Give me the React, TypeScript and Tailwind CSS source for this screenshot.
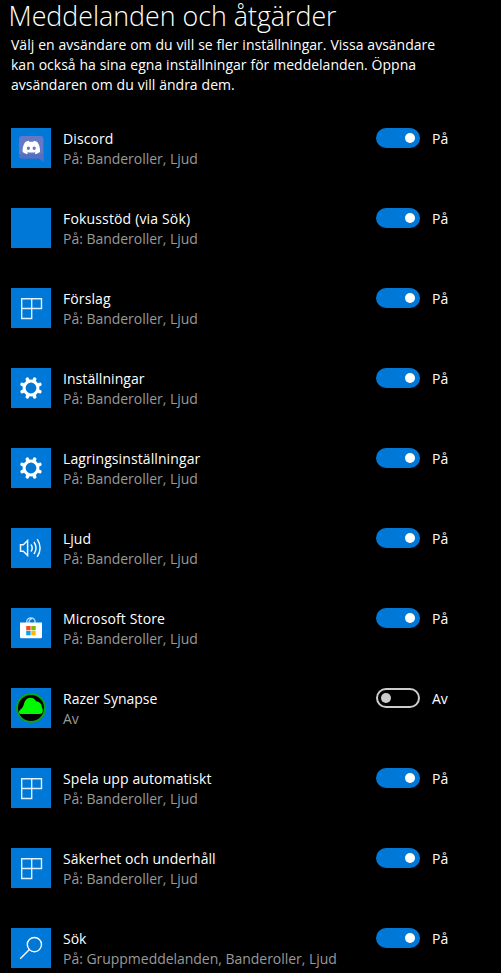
import { FaDiscord } from 'react-icons/fa';

type IconName = 'discord' | 'blank' | 'tiles' | 'gear' | 'sound' | 'store' | 'razer' | 'search';

interface Sender {
  name: string;
  detail: string;
  icon: IconName;
  on: boolean;
  nameSpacing: string;
}

const both = 'På: Banderoller, Ljud';

const senders: Sender[] = [
  { name: 'Discord', detail: both, icon: 'discord', on: true, nameSpacing: 'tracking-[0.1px]' },
  { name: 'Fokusstöd (via Sök)', detail: both, icon: 'blank', on: true, nameSpacing: 'tracking-[0.16px]' },
  { name: 'Förslag', detail: both, icon: 'tiles', on: true, nameSpacing: 'tracking-[0.1px]' },
  { name: 'Inställningar', detail: both, icon: 'gear', on: true, nameSpacing: 'tracking-[0.06px]' },
  { name: 'Lagringsinställningar', detail: both, icon: 'gear', on: true, nameSpacing: 'tracking-[0.1px]' },
  { name: 'Ljud', detail: both, icon: 'sound', on: true, nameSpacing: 'tracking-[0px]' },
  { name: 'Microsoft Store', detail: both, icon: 'store', on: true, nameSpacing: 'tracking-[0.13px]' },
  { name: 'Razer Synapse', detail: 'Av', icon: 'razer', on: false, nameSpacing: 'tracking-[0px]' },
  { name: 'Spela upp automatiskt', detail: both, icon: 'tiles', on: true, nameSpacing: 'tracking-[0.1px]' },
  { name: 'Säkerhet och underhåll', detail: both, icon: 'tiles', on: true, nameSpacing: 'tracking-[0.05px]' },
  { name: 'Sök', detail: 'På: Gruppmeddelanden, Banderoller, Ljud', icon: 'search', on: true, nameSpacing: 'tracking-[0px]' },
];

const toothAngles = [22.5, 67.5, 112.5, 157.5, 202.5, 247.5, 292.5, 337.5];

function Glyph({ icon }: { icon: IconName }) {
  switch (icon) {
    case 'discord':
      return (
        <>
          <path d="M11 8h18.5a3 3 0 0 1 3 3v23l-4.5-3.5H11a3 3 0 0 1-3-3V11a3 3 0 0 1 3-3z" fill="#6379c5" />
          <path d="M8 26v1.5a3 3 0 0 0 3 3h17l4.5 3.5v-8z" fill="#4c66bb" opacity="0.5" />
          <FaDiscord x={10.8} y={10} size={19} color="#fff" />
        </>
      );
    case 'tiles':
      return <path d="M10.7 10.7h19.8v9.8h-9.8v10h-10zM20.7 10.7v9.8h-10" fill="none" stroke="#dff0fd" strokeWidth="1.4" />;
    case 'gear':
      return (
        <g stroke="#fff" fill="none">
          <circle cx="20" cy="20" r="6.9" strokeWidth="3" />
          {toothAngles.map((a) => (
            <path key={a} d="M20 12.6V10.4" strokeWidth="3.6" strokeLinecap="round" transform={`rotate(${a} 20 20)`} />
          ))}
        </g>
      );
    case 'sound':
      return (
        <g fill="none" stroke="#eef7fe" strokeWidth="1.5">
          <path d="M9.5 16.7h2.8l4.3-4.2v15l-4.3-4.2H9.5z" />
          <path d="M20 16.5q2.4 3.5 0 7M23 14q4 6 0 12M26.2 11.2q5.8 8.8 0 17.6" />
        </g>
      );
    case 'store':
      return (
        <>
          <path d="M15.7 15.5V14a4.2 4.2 0 0 1 8.4 0v1.5M18 15.5V13.5a4 4 0 0 1 3-3" fill="none" stroke="#b9dcf7" strokeWidth="1.3" />
          <path d="M9 14.6h22v14.4a1.3 1.3 0 0 1-1.3 1.3H10.3A1.3 1.3 0 0 1 9 29z" fill="#fff" />
          <path d="M15.2 18h4.4v4.3h-4.4z" fill="#f04e1f" />
          <path d="M20.3 18h4.4v4.3h-4.4z" fill="#7fba00" />
          <path d="M15.2 23h4.4v4.3h-4.4z" fill="#00a4ef" />
          <path d="M20.3 23h4.4v4.3h-4.4z" fill="#ffb900" />
        </>
      );
    case 'razer':
      return (
        <>
          <circle cx="20" cy="20" r="14" fill="#000" stroke="#08a51e" strokeWidth="2" />
          <path d="M9.5 26C7.4 25.4 7.6 23 9.5 21.5C11.2 20.4 12 19 12.8 16.5C14 12 16 9.7 19.4 9.7c3 0 4.8 1.6 5.6 3.6c3.4.2 5.8 2.8 5.8 5.7c1.6 2.6 1.6 7-1.8 7z" fill="#00f800" />
        </>
      );
    case 'search':
      return (
        <g fill="none" stroke="#fff" strokeWidth="1.4">
          <circle cx="23.4" cy="16.6" r="7.1" />
          <path d="M18.4 21.6L9.2 30.8" />
        </g>
      );
    default:
      return null;
  }
}

function Toggle({ on }: { on: boolean }) {
  return on ? (
    <span className="flex h-5 w-11 items-center justify-end rounded-full bg-[#0078d7] pr-[5px]">
      <span className="size-2.5 rounded-full bg-white" />
    </span>
  ) : (
    <span className="flex h-5 w-11 items-center rounded-full border-2 border-[#cccccc] pl-[3px]">
      <span className="size-2.5 rounded-full bg-[#cccccc]" />
    </span>
  );
}

export default function App() {
  return (
    <main className="h-[973px] w-[501px] overflow-hidden bg-black font-['Open_Sans','Noto_Sans',sans-serif] text-[14px] leading-5 whitespace-nowrap text-white">
      <h1 className="h-[35px] pl-[8.5px] text-[26.8px] leading-[31px] font-light">Meddelanden och åtgärder</h1>
      <p className="h-[93px] pl-[11px] [word-spacing:0.3px]">
        Välj en avsändare om du vill se fler inställningar. Vissa avsändare
        <br />
        kan också ha sina egna inställningar för meddelanden. Öppna
        <br />
        avsändaren om du vill ändra dem.
      </p>
      <ul className="flex flex-col gap-10 pl-[11px]">
        {senders.map((s) => (
          <li key={s.name} className="flex h-10 items-start">
            <svg viewBox="0 0 40 40" className="size-10 shrink-0 bg-[#0078d7]">
              <Glyph icon={s.icon} />
            </svg>
            <div className="w-[325px] pt-px pl-3">
              <div className={s.nameSpacing}>{s.name}</div>
              <div className="tracking-[-0.03px] text-[#999999]">{s.detail}</div>
            </div>
            <Toggle on={s.on} />
            <span className="pt-px pl-3">{s.on ? 'På' : 'Av'}</span>
          </li>
        ))}
      </ul>
    </main>
  );
}
